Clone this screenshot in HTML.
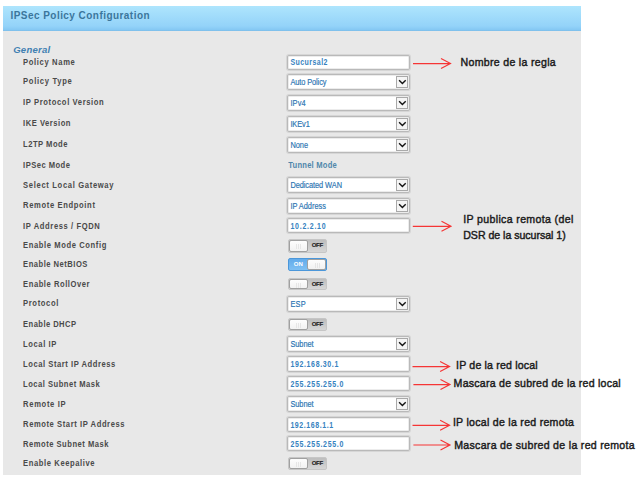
<!DOCTYPE html><html><head><meta charset='utf-8'><style>
*{margin:0;padding:0;box-sizing:border-box}
html,body{width:640px;height:485px;overflow:hidden;background:#fff;font-family:"Liberation Sans", sans-serif}
#panel{position:absolute;left:3px;top:6px;width:578px;height:468.5px;background:#e8e8e8}
#hdr{position:absolute;left:3px;top:6px;width:578px;height:24.7px;background:linear-gradient(#aee5fd,#94d3f9 80%,#86c9f4 94%,#7cbde9)}
.t{position:absolute;white-space:nowrap}
.lbl{font-size:7.6px;line-height:7.6px;font-weight:bold;color:#4a4a4a;left:23.1px;transform:scaleY(1.16);transform-origin:0 6.43px}
.box{position:absolute;left:287px;width:122.6px;background:#fff;border:1px solid #b9b9b9;border-radius:2px;box-shadow:0 0 0 1px #d6d6d6, inset 0 0 0 1px #ececec}
.val{position:absolute;left:3px;color:#2f78b4;white-space:nowrap}
.vi{font-weight:bold;font-size:7px;line-height:7px;color:#3682c0;transform:scaleY(1.2);transform-origin:0 5.93px;left:2.4px}
.vs{font-size:7.4px;line-height:7.4px;color:#2a72b0;-webkit-text-stroke:0.15px #3079b6;left:2.4px;transform:scaleY(1.12);transform-origin:0 6.3px}
.dd{position:absolute;right:1px;top:1px;bottom:1px;width:12px;border:1px solid #a9a9a9;background:#f5f5f5}
.tog{position:absolute;left:287.7px;width:39.5px;border-radius:2px}
.off{background:linear-gradient(#bdbdbd,#d6d6d6);border:1px solid #c6c6c6}
.on{background:linear-gradient(#62abeb,#7fc0f3);border:1px solid #4b97da}
.knob{position:absolute;top:0;bottom:0;width:19px;background:linear-gradient(#fdfdfd,#f2f2f2);border:1px solid #a0a0a0;border-radius:2px}
.grip{position:absolute;left:6.5px;top:3px;width:5px;height:5px;background:repeating-linear-gradient(90deg,#e6e6e6 0 1px,transparent 1px 2px)}
.tt{position:absolute;font-size:6px;line-height:6px;font-weight:bold}
.note{font-size:10.6px;line-height:10.6px;transform:scaleY(1.07);transform-origin:0 8.97px;color:#161616;-webkit-text-stroke:0.4px #1c1c1c}
</style></head><body>
<div id='panel'></div><div id='hdr'></div>
<div class='t' style='left:10.5px;top:10.73px;font-size:10px;line-height:10px;font-weight:bold;letter-spacing:0.45px;color:#3b769c;transform:scaleY(1.05);transform-origin:0 8.46px'>IPSec Policy Configuration</div>
<div class='t' style='left:13.2px;top:45.16px;font-size:9.5px;line-height:9.5px;font-weight:bold;font-style:italic;letter-spacing:0.28px;color:#4080b2'>General</div>
<div class='t lbl' style='top:59.17px;letter-spacing:0.650px'>Policy Name</div>
<div class='t lbl' style='top:78.47px;letter-spacing:0.710px'>Policy Type</div>
<div class='t lbl' style='top:99.37px;letter-spacing:0.620px'>IP Protocol Version</div>
<div class='t lbl' style='top:119.97px;letter-spacing:0.520px'>IKE Version</div>
<div class='t lbl' style='top:140.97px;letter-spacing:0.490px'>L2TP Mode</div>
<div class='t lbl' style='top:161.77px;letter-spacing:0.460px'>IPSec Mode</div>
<div class='t lbl' style='top:181.57px;letter-spacing:0.670px'>Select Local Gateway</div>
<div class='t lbl' style='top:202.17px;letter-spacing:0.640px'>Remote Endpoint</div>
<div class='t lbl' style='top:223.17px;letter-spacing:0.600px'>IP Address / FQDN</div>
<div class='t lbl' style='top:242.47px;letter-spacing:0.600px'>Enable Mode Config</div>
<div class='t lbl' style='top:261.47px;letter-spacing:0.500px'>Enable NetBIOS</div>
<div class='t lbl' style='top:280.67px;letter-spacing:0.550px'>Enable RollOver</div>
<div class='t lbl' style='top:300.47px;letter-spacing:0.630px'>Protocol</div>
<div class='t lbl' style='top:321.27px;letter-spacing:0.440px'>Enable DHCP</div>
<div class='t lbl' style='top:340.57px;letter-spacing:0.590px'>Local IP</div>
<div class='t lbl' style='top:361.17px;letter-spacing:0.550px'>Local Start IP Address</div>
<div class='t lbl' style='top:381.27px;letter-spacing:0.490px'>Local Subnet Mask</div>
<div class='t lbl' style='top:400.57px;letter-spacing:0.680px'>Remote IP</div>
<div class='t lbl' style='top:421.37px;letter-spacing:0.580px'>Remote Start IP Address</div>
<div class='t lbl' style='top:441.17px;letter-spacing:0.500px'>Remote Subnet Mask</div>
<div class='t lbl' style='top:460.47px;letter-spacing:0.600px'>Enable Keepalive</div>
<div class='box' style='top:54.5px;height:15.00px'><div class='val vi' style='top:3.97px;letter-spacing:0.45px'>Sucursal2</div></div>
<div class='box' style='top:73.7px;height:16.80px'><div class='val vs' style='top:4.24px;letter-spacing:-0.09px'>Auto Policy</div><div class='dd'><svg width='10' height='10' viewBox='0 0 10 10' style='position:absolute;left:0;top:0'><path d='M2.1 3.2 L5.4 6.5 L8.7 3.2' fill='none' stroke='#141414' stroke-width='1.4'/></svg></div></div>
<div class='box' style='top:94.7px;height:16.40px'><div class='val vs' style='top:4.04px;letter-spacing:0.13px'>IPv4</div><div class='dd'><svg width='10' height='10' viewBox='0 0 10 10' style='position:absolute;left:0;top:0'><path d='M2.1 3.2 L5.4 6.5 L8.7 3.2' fill='none' stroke='#141414' stroke-width='1.4'/></svg></div></div>
<div class='box' style='top:115.5px;height:16.60px'><div class='val vs' style='top:4.14px;letter-spacing:-0.08px'>IKEv1</div><div class='dd'><svg width='10' height='10' viewBox='0 0 10 10' style='position:absolute;left:0;top:0'><path d='M2.1 3.2 L5.4 6.5 L8.7 3.2' fill='none' stroke='#141414' stroke-width='1.4'/></svg></div></div>
<div class='box' style='top:136.5px;height:16.50px'><div class='val vs' style='top:4.09px;letter-spacing:0.01px'>None</div><div class='dd'><svg width='10' height='10' viewBox='0 0 10 10' style='position:absolute;left:0;top:0'><path d='M2.1 3.2 L5.4 6.5 L8.7 3.2' fill='none' stroke='#141414' stroke-width='1.4'/></svg></div></div>
<div class='t lbl' style='left:288.3px;top:161.67px;letter-spacing:0.22px;color:#5087ab'>Tunnel Mode</div>
<div class='box' style='top:177.0px;height:15.80px'><div class='val vs' style='top:3.74px;letter-spacing:-0.06px'>Dedicated WAN</div><div class='dd'><svg width='10' height='10' viewBox='0 0 10 10' style='position:absolute;left:0;top:0'><path d='M2.1 3.2 L5.4 6.5 L8.7 3.2' fill='none' stroke='#141414' stroke-width='1.4'/></svg></div></div>
<div class='box' style='top:197.5px;height:16.40px'><div class='val vs' style='top:4.04px;letter-spacing:-0.01px'>IP Address</div><div class='dd'><svg width='10' height='10' viewBox='0 0 10 10' style='position:absolute;left:0;top:0'><path d='M2.1 3.2 L5.4 6.5 L8.7 3.2' fill='none' stroke='#141414' stroke-width='1.4'/></svg></div></div>
<div class='box' style='top:218.1px;height:15.10px'><div class='val vi' style='top:4.02px;letter-spacing:0.76px'>10.2.2.10</div></div>
<div class='tog off' style='top:239px;height:13.50px'><div class='knob' style='left:0'><div class='grip'></div></div><div class='tt' style='left:23px;top:2.45px;color:#1e1e1e;letter-spacing:-0.25px;-webkit-text-stroke:0.15px #222'>OFF</div></div>
<div class='tog on' style='top:258.1px;height:13.30px'><div class='tt' style='left:5px;top:2.35px;color:#fff;letter-spacing:0.2px'>ON</div><div class='knob' style='right:0'><div class='grip'></div></div></div>
<div class='tog off' style='top:277.5px;height:12.90px'><div class='knob' style='left:0'><div class='grip'></div></div><div class='tt' style='left:23px;top:2.15px;color:#1e1e1e;letter-spacing:-0.25px;-webkit-text-stroke:0.15px #222'>OFF</div></div>
<div class='box' style='top:295.7px;height:16.60px'><div class='val vs' style='top:4.14px;letter-spacing:0.2px'>ESP</div><div class='dd'><svg width='10' height='10' viewBox='0 0 10 10' style='position:absolute;left:0;top:0'><path d='M2.1 3.2 L5.4 6.5 L8.7 3.2' fill='none' stroke='#141414' stroke-width='1.4'/></svg></div></div>
<div class='tog off' style='top:317.7px;height:13.10px'><div class='knob' style='left:0'><div class='grip'></div></div><div class='tt' style='left:23px;top:2.25px;color:#1e1e1e;letter-spacing:-0.25px;-webkit-text-stroke:0.15px #222'>OFF</div></div>
<div class='box' style='top:335.8px;height:16.50px'><div class='val vs' style='top:4.09px;letter-spacing:-0.05px'>Subnet</div><div class='dd'><svg width='10' height='10' viewBox='0 0 10 10' style='position:absolute;left:0;top:0'><path d='M2.1 3.2 L5.4 6.5 L8.7 3.2' fill='none' stroke='#141414' stroke-width='1.4'/></svg></div></div>
<div class='box' style='top:356.3px;height:15.30px'><div class='val vi' style='top:4.12px;letter-spacing:0.64px'>192.168.30.1</div></div>
<div class='box' style='top:376.1px;height:15.10px'><div class='val vi' style='top:4.02px;letter-spacing:0.68px'>255.255.255.0</div></div>
<div class='box' style='top:396.0px;height:15.90px'><div class='val vs' style='top:3.79px;letter-spacing:-0.05px'>Subnet</div><div class='dd'><svg width='10' height='10' viewBox='0 0 10 10' style='position:absolute;left:0;top:0'><path d='M2.1 3.2 L5.4 6.5 L8.7 3.2' fill='none' stroke='#141414' stroke-width='1.4'/></svg></div></div>
<div class='box' style='top:416.8px;height:14.80px'><div class='val vi' style='top:3.87px;letter-spacing:0.58px'>192.168.1.1</div></div>
<div class='box' style='top:435.9px;height:15.00px'><div class='val vi' style='top:3.97px;letter-spacing:0.68px'>255.255.255.0</div></div>
<div class='tog off' style='top:457.2px;height:12.80px'><div class='knob' style='left:0'><div class='grip'></div></div><div class='tt' style='left:23px;top:2.10px;color:#1e1e1e;letter-spacing:-0.25px;-webkit-text-stroke:0.15px #222'>OFF</div></div>
<svg width='640' height='485' style='position:absolute;left:0;top:0'><path d='M413 63.6 L450.5 63.6 M441.0 58.6 L450.5 63.6 L441.0 68.6' fill='none' stroke='#f53535' stroke-width='1.15'/><path d='M412.8 226.3 L451 226.3 M441.5 221.3 L451 226.3 L441.5 231.3' fill='none' stroke='#f53535' stroke-width='1.15'/><path d='M412.5 366.6 L449.6 366.6 M440.1 361.6 L449.6 366.6 L440.1 371.6' fill='none' stroke='#f53535' stroke-width='1.15'/><path d='M413.4 384.6 L450 384.6 M440.5 379.6 L450 384.6 L440.5 389.6' fill='none' stroke='#f53535' stroke-width='1.15'/><path d='M412.5 425.3 L449.6 425.3 M440.1 420.3 L449.6 425.3 L440.1 430.3' fill='none' stroke='#f53535' stroke-width='1.15'/><path d='M413.4 445 L450 445 M440.5 440 L450 445 L440.5 450' fill='none' stroke='#f53535' stroke-width='1.15'/></svg>
<div class='t note' style='left:460.5px;top:57.23px;letter-spacing:0.3px'>Nombre de la regla</div>
<div class='t note' style='left:463.25px;top:214.23px;letter-spacing:0.34px'>IP publica remota (del</div>
<div class='t note' style='left:463.25px;top:230.18px;letter-spacing:-0.03px'>DSR de la sucursal 1)</div>
<div class='t note' style='left:456.1px;top:359.53px;letter-spacing:0.164px'>IP de la red local</div>
<div class='t note' style='left:453.6px;top:378.33px;letter-spacing:0.235px'>Mascara de subred de la red local</div>
<div class='t note' style='left:452.9px;top:416.73px;letter-spacing:0.269px'>IP local de la red remota</div>
<div class='t note' style='left:454.2px;top:440.23px;letter-spacing:0.295px'>Mascara de subred de la red remota</div>
</body></html>
